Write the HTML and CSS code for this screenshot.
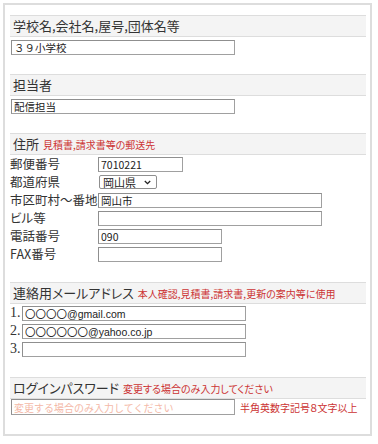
FILE: index.html
```html
<!DOCTYPE html>
<html lang="ja">
<head>
  <meta charset="UTF-8" />
  <meta name="viewport" content="width=device-width, initial-scale=1.0"/>
  <title>登録情報</title>
  <link rel="stylesheet" href="styles.css">
</head>
<body>
  <div class="form-box">
    <div class="section">
      <div class="head">学校名,会社名,屋号,団体名等</div>
      <input type="text" class="field wide" value="３９小学校" />
    </div>

    <div class="section">
      <div class="head">担当者</div>
      <input type="text" class="field wide" value="配信担当" />
    </div>

    <div class="section">
      <div class="head">住所 <span class="note">見積書,請求書等の郵送先</span></div>
      <div class="addr">
        <label>郵便番号</label>
        <input type="text" class="field zip" value="7010221" />
        <label>都道府県</label>
        <div class="select-wrap">
          <select class="pref"><option>岡山県</option></select>
          <svg class="chevron" width="7" height="5" viewBox="0 0 7 5"><path d="M0.8 1 L3.5 3.7 L6.2 1" fill="none" stroke="#222" stroke-width="1.3"/></svg>
        </div>
        <label>市区町村～番地</label>
        <input type="text" class="field long" value="岡山市" />
        <label>ビル等</label>
        <input type="text" class="field long" />
        <label>電話番号</label>
        <input type="text" class="field tel" value="090" />
        <label>FAX番号</label>
        <input type="text" class="field tel" />
      </div>
    </div>

    <div class="section">
      <div class="head">連絡用メールアドレス <span class="note">本人確認,見積書,請求書,更新の案内等に使用</span></div>
      <div class="mail"><span class="num">1.</span><input type="text" class="field wide" value="〇〇〇〇@gmail.com" /></div>
      <div class="mail"><span class="num">2.</span><input type="text" class="field wide" value="〇〇〇〇〇〇@yahoo.co.jp" /></div>
      <div class="mail"><span class="num">3.</span><input type="text" class="field wide" /></div>
    </div>

    <div class="section last">
      <div class="head">ログインパスワード <span class="note">変更する場合のみ入力してください</span></div>
      <div class="pass">
        <input type="password" class="field wide" placeholder="変更する場合のみ入力してください" />
        <span class="note rule">半角英数字記号８文字以上</span>
      </div>
    </div>
  </div>
</body>
</html>
```

FILE: styles.css
```css
body {
  margin: 0;
  padding: 3px;
  background: #ffffff;
  font-family: "Noto Sans CJK JP", "Noto Sans", sans-serif;
  font-feature-settings: "palt";
  color: #333333;
}

.form-box {
  width: 369px;
  box-sizing: border-box;
  border: 2px solid #dddddd;
  padding: 10px 4px 19px 5px;
}

.section {
  margin-bottom: 19px;
}

.section.last {
  margin-bottom: 0;
}

.head {
  background: #f4f4f4;
  border-top: 1px solid #dddddd;
  border-bottom: 1px solid #dddddd;
  font-size: 13px;
  line-height: 20px;
  height: 20px;
  padding-left: 3px;
  white-space: nowrap;
  word-spacing: 1px;
}

.note {
  color: #cc3333;
  font-size: 10px;
}

.field {
  display: block;
  box-sizing: border-box;
  height: 15px;
  border: 1px solid #a0a0a0;
  border-top-color: #8f8f8f;
  border-left-color: #8f8f8f;
  padding: 0 2px;
  margin: 0;
  font-family: "Noto Sans CJK JP", "Noto Sans", sans-serif;
  font-feature-settings: normal;
  font-size: 10.5px;
  line-height: 13px;
  color: #222222;
  outline: none;
}

.section > .field {
  margin: 3px 0 0 1px;
}

.wide {
  width: 224px;
}

.addr {
  display: grid;
  grid-template-columns: 88px auto;
  grid-auto-rows: 18px;
  align-items: center;
}

.addr label {
  font-size: 12.5px;
  line-height: 18px;
  white-space: nowrap;
}

.zip {
  width: 85px;
}

.long {
  width: 224px;
}

.tel {
  width: 124px;
}

.select-wrap {
  position: relative;
  width: 58px;
  height: 14px;
  margin-left: 1px;
}

.pref {
  appearance: none;
  -webkit-appearance: none;
  display: block;
  box-sizing: border-box;
  width: 58px;
  height: 14px;
  font-family: "Noto Sans CJK JP", sans-serif;
  font-size: 11px;
  line-height: 12px;
  padding: 0 0 0 3px;
  border: 1px solid #8f8f8f;
  border-radius: 2px;
  background: #ffffff;
  color: #222222;
}

.chevron {
  position: absolute;
  right: 6px;
  top: 5px;
  pointer-events: none;
}

.mail {
  display: flex;
  align-items: center;
  height: 18px;
}

.mail .num {
  font-family: "Liberation Serif", serif;
  font-size: 14px;
  line-height: 18px;
  width: 12px;
}

.mail .field {
  font-family: "Liberation Sans", "Noto Sans CJK JP", sans-serif;
  font-size: 10.5px;
}

.pass {
  display: flex;
  align-items: center;
  gap: 5px;
}

.pass .field {
  height: 16px;
  margin-left: 1px;
  font-size: 10px;
}

.pass .field::placeholder {
  color: #f4b9a8;
}

.rule {
  white-space: nowrap;
}
```
